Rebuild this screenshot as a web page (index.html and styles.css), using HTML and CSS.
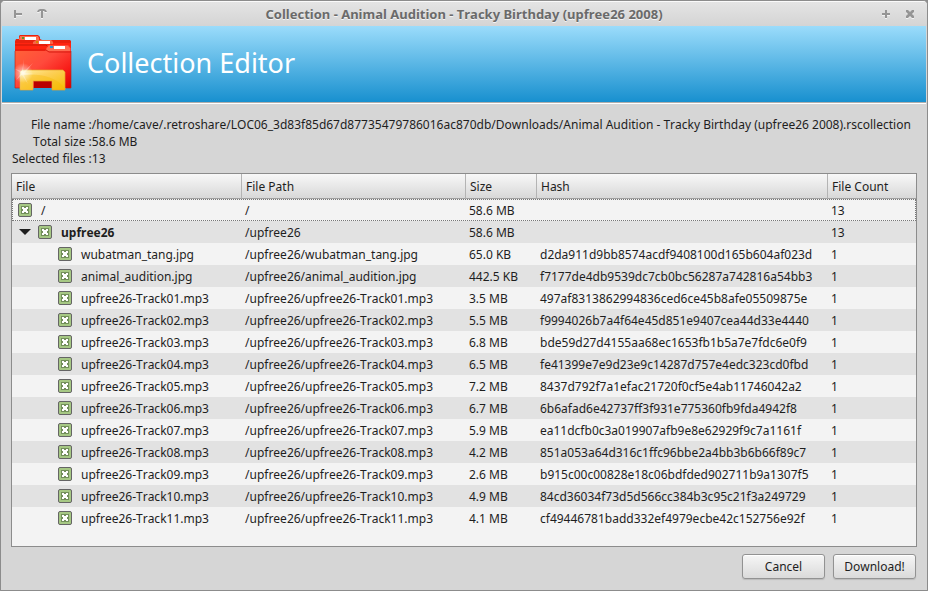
FILE: index.html
```
<!DOCTYPE html>
<html lang="en">
<head>
<meta charset="utf-8">
<title>Collection Editor</title>
<link rel="stylesheet" href="styles.css">
</head>
<body>
<div class="window">
  <header class="titlebar">
    <div class="controls">
      <button type="button" aria-label="Stick"><svg width="10" height="10" viewBox="0 0 10 10"><path d="M1 1h2v3h6v2H3v3H1z"/></svg></button>
      <button type="button" aria-label="Shade"><svg width="10" height="10" viewBox="0 0 10 10"><path d="M3 0h4l2 1 1 2H8L7 2H6v7H4V2H3L2 3H0l1-2z"/></svg></button>
    </div>
    <h1 class="title">Collection - Animal Audition - Tracky Birthday (upfree26 2008)</h1>
    <div class="controls">
      <button type="button" aria-label="Maximize"><svg width="10" height="10" viewBox="0 0 10 10"><path d="M4 1h2v3h3v2H6v3H4V6H1V4h3z"/></svg></button>
      <button type="button" aria-label="Close"><svg width="10" height="10" viewBox="0 0 10 10"><path d="M1 1h2l2 2 2-2h2v2L7 5l2 2v2H7L5 7 3 9H1V7l2-2-2-2z"/></svg></button>
    </div>
  </header>

  <div class="banner">
    <svg class="logo" width="58" height="56" viewBox="0 0 58 56" aria-hidden="true">
      <defs>
        <linearGradient id="front" x1="0" y1="0" x2="1" y2="1">
          <stop offset="0" stop-color="#ff6638"/><stop offset=".45" stop-color="#ff4a3c"/><stop offset=".75" stop-color="#f81c18"/><stop offset="1" stop-color="#d80000"/>
        </linearGradient>
        <linearGradient id="gold" x1="0" y1="0" x2="1" y2="1">
          <stop offset="0" stop-color="#fff0a0"/><stop offset=".4" stop-color="#fdd05a"/><stop offset="1" stop-color="#f5bd00"/>
        </linearGradient>
        <radialGradient id="flare">
          <stop offset="0" stop-color="#fff"/><stop offset=".3" stop-color="#fff" stop-opacity=".6"/><stop offset="1" stop-color="#fff" stop-opacity="0"/>
        </radialGradient>
      </defs>
      <path d="M1 6l1-2h3V1l1-1h18l2 2v2l2 1h28l1 1v47H1z" fill="#e9210e"/>
      <path d="M6 1h18l1 2v2H5z" fill="#ff6e4c"/>
      <path d="M1 8h19l2-3h16l2 3h17v8H1z" fill="#ff2410"/>
      <path d="M19 7l3-2h15l2 2v2H19z" fill="#f76547"/>
      <path d="M1 10h31l3 3h22" fill="none" stroke="#c81808"/>
      <path d="M1 16h30l2-4 2-2h19l3 3v39l-1 1H1z" fill="url(#front)"/>
      <path d="M33 13l2-2h19l2 2v3H32z" fill="#ff6b50"/>
      <path d="M1 15h31l3 2h22" fill="none" stroke="#d51d10"/>
      <path d="M11 2h11v3H11zM25 6h11v3H25zM40 11h11v3H40z" fill="#fff"/>
      <path d="M8 2h2v2H8z" fill="#5d9a24"/>
      <path d="M22 6h2v2h-2z" fill="#d68400"/>
      <path d="M36 11h3v2h-3z" fill="#2395d5"/>
      <path d="M1 16v37h5M52 53h5V16" fill="none" stroke="#b81a10" stroke-opacity=".6"/>
      <path d="M20 46h18v7H20z" fill="#b90000"/>
      <path d="M8 35h41l2 2v18H38v-9H19v9H6V37z" fill="url(#gold)" stroke="#e5a12a" stroke-width=".7"/>
      <path d="M7 40q30-3 43 12v2H39v-8H18v8H7z" fill="#f5b800" opacity=".35"/>
      <circle cx="9" cy="38" r="10" fill="url(#flare)" opacity=".8"/>
      <path d="M10 24l-1 13 10-9-8 10 10 1-11 1 4 9-6-9-6 5 5-7-6-4 7 2z" fill="#fff" opacity=".3"/>
    </svg>
    <h2 class="heading">Collection Editor</h2>
  </div>

  <main class="content">
    <dl class="info">
      <dt>File name :</dt><dd>/home/cave/.retroshare/LOC06_3d83f85d67d87735479786016ac870db/Downloads/Animal Audition - Tracky Birthday (upfree26 2008).rscollection</dd>
      <dt>Total size :</dt><dd>58.6 MB</dd>
      <dt>Selected files :</dt><dd>13</dd>
    </dl>

    <div class="files">
      <table>
        <colgroup><col class="c-file"><col class="c-path"><col class="c-size"><col class="c-hash"><col></colgroup>
        <thead>
          <tr><th scope="col">File</th><th scope="col">File Path</th><th scope="col">Size</th><th scope="col">Hash</th><th scope="col">File Count</th></tr>
        </thead>
        <tbody>
          <tr class="current"><td><div class="node"><input type="checkbox" id="f0" checked><label for="f0">/</label></div></td><td>/</td><td>58.6 MB</td><td></td><td>13</td></tr>
          <tr><td><div class="node branch"><button type="button" class="toggle" aria-label="Collapse" aria-expanded="true"></button><input type="checkbox" id="f1" checked><label for="f1">upfree26</label></div></td><td>/upfree26</td><td>58.6 MB</td><td></td><td>13</td></tr>
          <tr><td><div class="node leaf"><input type="checkbox" id="f2" checked><label for="f2">wubatman_tang.jpg</label></div></td><td>/upfree26/wubatman_tang.jpg</td><td>65.0 KB</td><td>d2da911d9bb8574acdf9408100d165b604af023d</td><td>1</td></tr>
          <tr><td><div class="node leaf"><input type="checkbox" id="f3" checked><label for="f3">animal_audition.jpg</label></div></td><td>/upfree26/animal_audition.jpg</td><td>442.5 KB</td><td>f7177de4db9539dc7cb0bc56287a742816a54bb3</td><td>1</td></tr>
          <tr><td><div class="node leaf"><input type="checkbox" id="f4" checked><label for="f4">upfree26-Track01.mp3</label></div></td><td>/upfree26/upfree26-Track01.mp3</td><td>3.5 MB</td><td>497af8313862994836ced6ce45b8afe05509875e</td><td>1</td></tr>
          <tr><td><div class="node leaf"><input type="checkbox" id="f5" checked><label for="f5">upfree26-Track02.mp3</label></div></td><td>/upfree26/upfree26-Track02.mp3</td><td>5.5 MB</td><td>f9994026b7a4f64e45d851e9407cea44d33e4440</td><td>1</td></tr>
          <tr><td><div class="node leaf"><input type="checkbox" id="f6" checked><label for="f6">upfree26-Track03.mp3</label></div></td><td>/upfree26/upfree26-Track03.mp3</td><td>6.8 MB</td><td>bde59d27d4155aa68ec1653fb1b5a7e7fdc6e0f9</td><td>1</td></tr>
          <tr><td><div class="node leaf"><input type="checkbox" id="f7" checked><label for="f7">upfree26-Track04.mp3</label></div></td><td>/upfree26/upfree26-Track04.mp3</td><td>6.5 MB</td><td>fe41399e7e9d23e9c14287d757e4edc323cd0fbd</td><td>1</td></tr>
          <tr><td><div class="node leaf"><input type="checkbox" id="f8" checked><label for="f8">upfree26-Track05.mp3</label></div></td><td>/upfree26/upfree26-Track05.mp3</td><td>7.2 MB</td><td>8437d792f7a1efac21720f0cf5e4ab11746042a2</td><td>1</td></tr>
          <tr><td><div class="node leaf"><input type="checkbox" id="f9" checked><label for="f9">upfree26-Track06.mp3</label></div></td><td>/upfree26/upfree26-Track06.mp3</td><td>6.7 MB</td><td>6b6afad6e42737ff3f931e775360fb9fda4942f8</td><td>1</td></tr>
          <tr><td><div class="node leaf"><input type="checkbox" id="f10" checked><label for="f10">upfree26-Track07.mp3</label></div></td><td>/upfree26/upfree26-Track07.mp3</td><td>5.9 MB</td><td>ea11dcfb0c3a019907afb9e8e62929f9c7a1161f</td><td>1</td></tr>
          <tr><td><div class="node leaf"><input type="checkbox" id="f11" checked><label for="f11">upfree26-Track08.mp3</label></div></td><td>/upfree26/upfree26-Track08.mp3</td><td>4.2 MB</td><td>851a053a64d316c1ffc96bbe2a4bb3b6b66f89c7</td><td>1</td></tr>
          <tr><td><div class="node leaf"><input type="checkbox" id="f12" checked><label for="f12">upfree26-Track09.mp3</label></div></td><td>/upfree26/upfree26-Track09.mp3</td><td>2.6 MB</td><td>b915c00c00828e18c06bdfded902711b9a1307f5</td><td>1</td></tr>
          <tr><td><div class="node leaf"><input type="checkbox" id="f13" checked><label for="f13">upfree26-Track10.mp3</label></div></td><td>/upfree26/upfree26-Track10.mp3</td><td>4.9 MB</td><td>84cd36034f73d5d566cc384b3c95c21f3a249729</td><td>1</td></tr>
          <tr><td><div class="node leaf"><input type="checkbox" id="f14" checked><label for="f14">upfree26-Track11.mp3</label></div></td><td>/upfree26/upfree26-Track11.mp3</td><td>4.1 MB</td><td>cf49446781badd332ef4979ecbe42c152756e92f</td><td>1</td></tr>
        </tbody>
      </table>
    </div>

    <footer class="actions">
      <button type="button">Cancel</button>
      <button type="button">Download!</button>
    </footer>
  </main>
</div>
</body>
</html>
```
FILE: styles.css
```
* {
  box-sizing: border-box;
}

body {
  margin: 0;
  background: #8c8c8c;
  color: #1e1e1e;
  font: 12px/17px "Noto Sans", sans-serif;
  font-kerning: none;
}

button {
  font: inherit;
  font-kerning: inherit;
  color: inherit;
}

.window {
  display: flex;
  flex-direction: column;
  min-height: 100vh;
  border: 1px solid #8c8c8c;
  border-radius: 5px 5px 0 0;
  background: #d6d6d6;
  overflow: hidden;
}

/* Title bar */
.titlebar {
  display: flex;
  align-items: center;
  justify-content: space-between;
  height: 25px;
  padding: 0 12px;
  border-top: 1px solid #fafafa;
  background: linear-gradient(#e4e4e4, #d4d4d4);
}

.title {
  margin: 0;
  font-size: 13px;
  font-weight: 700;
  color: #6a6a6a;
  text-shadow: 0 1px 0 #f4f4f4;
}

.controls {
  display: flex;
  gap: 14px;
}

.controls button {
  display: flex;
  padding: 0;
  border: 0;
  background: none;
}

.controls svg {
  fill: #959595;
  filter: drop-shadow(0 1px 0 #f2f2f2);
}

/* Banner */
.banner {
  display: flex;
  align-items: center;
  gap: 15px;
  height: 78px;
  margin: 0 1px;
  padding: 0 12px 3px;
  border-bottom: 1px solid #fff;
  background: linear-gradient(#9bdcfb, #1890cf 76px, #b0aeac 76px);
}

.heading {
  margin: 0;
  font-size: 27px;
  font-weight: 400;
  line-height: 38px;
  color: #fff;
}

/* Content */
.content {
  display: flex;
  flex: 1;
  flex-direction: column;
  padding: 12px 10px 11px;
}

.info {
  display: grid;
  grid-template-columns: auto 1fr;
  margin: 0 0 6px;
  padding: 0 1px;
}

.info dt {
  text-align: right;
}

.info dd {
  margin: 0;
}

.files {
  flex: 1;
  border: 1px solid #8c8c8c;
  background: #f3f3f3;
}

table {
  width: 100%;
  table-layout: fixed;
  border-collapse: separate;
  border-spacing: 0;
}

.c-file {
  width: 230px;
}

.c-path {
  width: 224px;
}

.c-size {
  width: 71px;
}

.c-hash {
  width: 291px;
}

th {
  height: 25px;
  padding: 0 4px;
  border-right: 1px solid #b4b4b4;
  border-bottom: 1px solid #a0a0a0;
  background: linear-gradient(#f8f8f8, #d8d8d8);
  font-weight: 400;
  text-align: left;
}

th:last-child {
  border-right: 0;
}

td {
  height: 22px;
  padding: 0 3px;
  white-space: nowrap;
}

td:first-child {
  padding: 0;
}

tbody tr:nth-child(even) {
  background: #e2e2e2;
}

.current {
  outline: 1px dotted #777;
  outline-offset: -1px;
}

.node {
  display: flex;
  align-items: center;
  gap: 9px;
  padding-left: 6px;
}

.leaf {
  padding-left: 46px;
}

.branch {
  padding-left: 0;
  font-weight: 700;
}

.toggle {
  width: 26px;
  height: 14px;
  margin-right: -9px;
  padding: 0;
  border: 0;
  background: none;
}

.toggle::before {
  content: "";
  display: block;
  width: 12px;
  height: 6px;
  margin: 0 auto;
  background: #1e1e1e;
  clip-path: polygon(0 0, 100% 0, 50% 100%);
}

input[type="checkbox"] {
  appearance: none;
  width: 14px;
  height: 14px;
  margin: 0;
  border: 1px solid #656565;
  border-radius: 2px;
  background: #a6c884;
}

input[type="checkbox"]:checked {
  background: #a6c884 url("data:image/svg+xml,%3Csvg xmlns='http://www.w3.org/2000/svg' width='12' height='12'%3E%3Cpath d='M2 2h8v8H2z' fill='%23738f5b'/%3E%3Cpath d='M3 3h2v1h2V3h2v2H8v2h1v2H7V8H5v1H3V7h1V5H3z' fill='%23fff'/%3E%3C/svg%3E");
}

/* Dialog buttons */
.actions {
  display: flex;
  justify-content: flex-end;
  gap: 8px;
  margin-top: 7px;
  padding-right: 1px;
}

.actions button {
  width: 83px;
  height: 25px;
  padding: 0;
  border: 1px solid #929292;
  border-radius: 3px;
  background: linear-gradient(#f6f6f6, #dadada);
  box-shadow: inset 0 1px 0 #fff, 0 1px 1px #bbb;
}
```
